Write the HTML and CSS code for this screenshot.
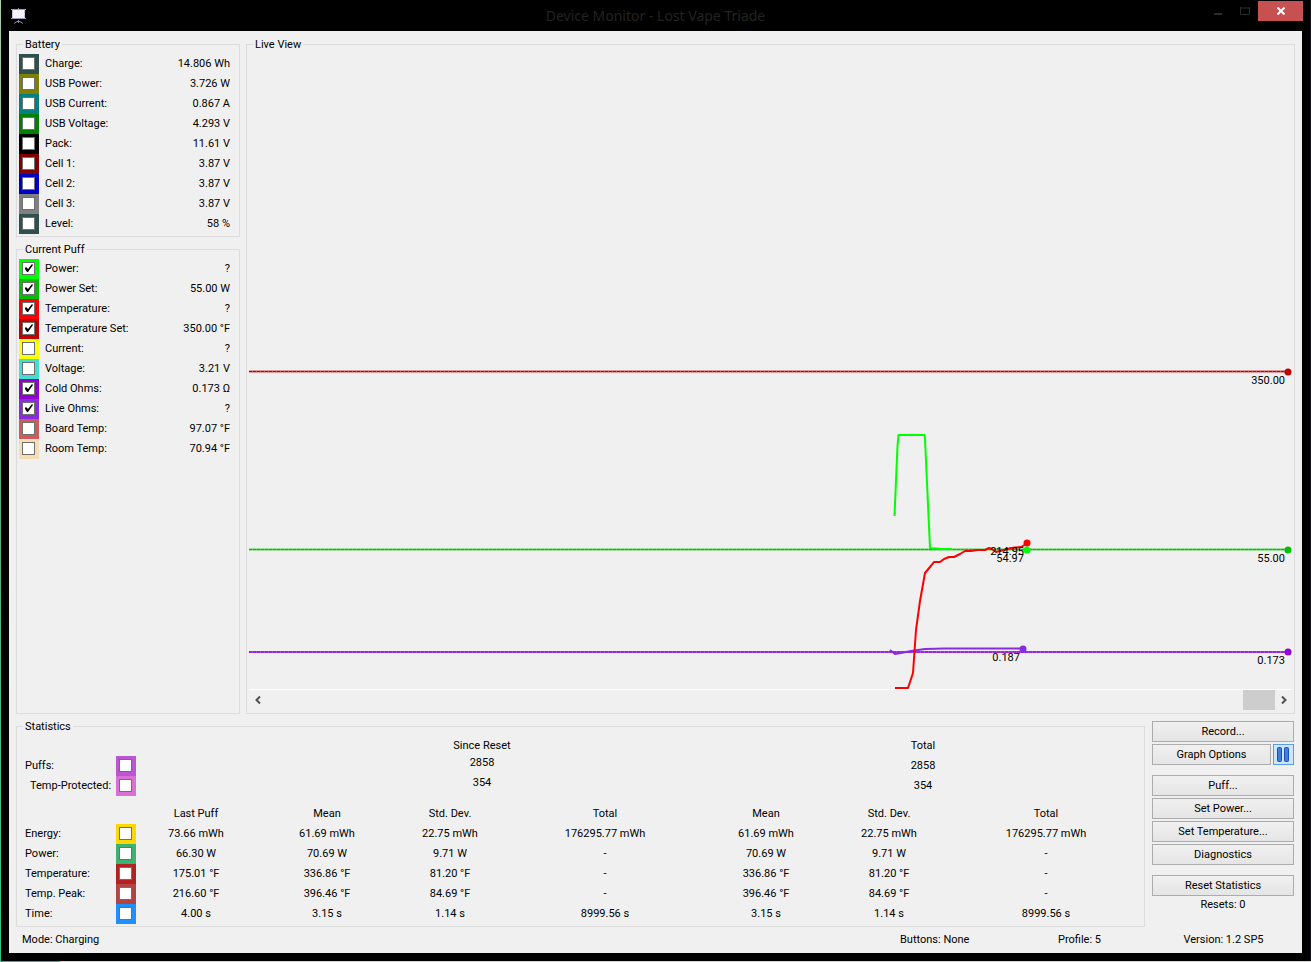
FILE: index.html
```
<!DOCTYPE html>
<html lang="en">
<head>
    <meta charset="UTF-8">
    <meta name="viewport" content="width=device-width, initial-scale=1.0">
    <title>Device Monitor - Lost Vape Triade</title>
    <link rel="stylesheet" href="styles.css">
</head>

<body>
    <div class="window">
        <header class="title-bar">
            <svg class="app-icon" width="16" height="16" viewBox="0 0 16 16">
                <path d="M7.500 0v2M7.500 12v3M3 15.500l3-2h3l3 2" fill="none" stroke="#8a8aa0" stroke-width="1" />
                <rect x="1.500" y="1.500" width="12" height="9" fill="#f4f4fa" stroke="#c4c4dc" />
                <path d="M0 1.500h15M0 10.500h15" stroke="#9a9abc" />
            </svg>
            <h1>Device Monitor - Lost Vape Triade</h1>
            <div class="window-btns">
                <button class="win-btn" aria-label="Minimize">
                    <svg width="10" height="8" viewBox="0 0 10 8"><rect x="1" y="6" width="8" height="2" fill="#2c2c2c" /></svg>
                </button>
                <button class="win-btn" aria-label="Maximize">
                    <svg width="10" height="8" viewBox="0 0 10 8"><path d="M.5 0v7.500h9V0M0 1h10" fill="none" stroke="#2c2c2c" /></svg>
                </button>
                <button class="win-btn close-btn" aria-label="Close">
                    <svg width="8" height="8" viewBox="0 0 8 8"><path d="M.5.5l7 7M7.500.5l-7 7" stroke="#fff" stroke-width="2" /></svg>
                </button>
            </div>
        </header>

        <main class="client">
            <div class="top">
                <div class="left">
                    <fieldset class="group">
                        <legend>Battery</legend>
                        <div class="row"><span class="swatch slate"><input type="checkbox" id="charge"></span><label for="charge">Charge:</label><output>14.806 Wh</output></div>
                        <div class="row"><span class="swatch olive"><input type="checkbox" id="usb-power"></span><label for="usb-power">USB Power:</label><output>3.726 W</output></div>
                        <div class="row"><span class="swatch teal"><input type="checkbox" id="usb-current"></span><label for="usb-current">USB Current:</label><output>0.867 A</output></div>
                        <div class="row"><span class="swatch green"><input type="checkbox" id="usb-voltage"></span><label for="usb-voltage">USB Voltage:</label><output>4.293 V</output></div>
                        <div class="row"><span class="swatch black"><input type="checkbox" id="pack"></span><label for="pack">Pack:</label><output>11.61 V</output></div>
                        <div class="row"><span class="swatch maroon"><input type="checkbox" id="cell1"></span><label for="cell1">Cell 1:</label><output>3.87 V</output></div>
                        <div class="row"><span class="swatch blue"><input type="checkbox" id="cell2"></span><label for="cell2">Cell 2:</label><output>3.87 V</output></div>
                        <div class="row"><span class="swatch gray"><input type="checkbox" id="cell3"></span><label for="cell3">Cell 3:</label><output>3.87 V</output></div>
                        <div class="row"><span class="swatch slate"><input type="checkbox" id="level"></span><label for="level">Level:</label><output>58 %</output></div>
                    </fieldset>

                    <fieldset class="group puff">
                        <legend>Current Puff</legend>
                        <div class="row"><span class="swatch lime"><input type="checkbox" id="power" checked></span><label for="power">Power:</label><output>?</output></div>
                        <div class="row"><span class="swatch power-set"><input type="checkbox" id="power-set" checked></span><label for="power-set">Power Set:</label><output>55.00 W</output></div>
                        <div class="row"><span class="swatch red"><input type="checkbox" id="temp" checked></span><label for="temp">Temperature:</label><output>?</output></div>
                        <div class="row"><span class="swatch temp-set"><input type="checkbox" id="temp-set" checked></span><label for="temp-set">Temperature Set:</label><output>350.00 °F</output></div>
                        <div class="row"><span class="swatch yellow"><input type="checkbox" id="current"></span><label for="current">Current:</label><output>?</output></div>
                        <div class="row"><span class="swatch turquoise"><input type="checkbox" id="voltage"></span><label for="voltage">Voltage:</label><output>3.21 V</output></div>
                        <div class="row"><span class="swatch cold"><input type="checkbox" id="cold-ohms" checked></span><label for="cold-ohms">Cold Ohms:</label><output>0.173 Ω</output></div>
                        <div class="row"><span class="swatch live"><input type="checkbox" id="live-ohms" checked></span><label for="live-ohms">Live Ohms:</label><output>?</output></div>
                        <div class="row"><span class="swatch indian"><input type="checkbox" id="board-temp"></span><label for="board-temp">Board Temp:</label><output>97.07 °F</output></div>
                        <div class="row"><span class="swatch wheat"><input type="checkbox" id="room-temp"></span><label for="room-temp">Room Temp:</label><output>70.94 °F</output></div>
                    </fieldset>
                </div>

                <fieldset class="group live-view">
                    <legend>Live View</legend>
                    <svg class="chart" viewBox="0 0 1043 638" preserveAspectRatio="xMaxYMax meet">
                        <!-- set points -->
                        <g class="line set">
                            <path d="M0 320.5H1039" stroke="#c00000" />
                            <path d="M0 498.5H1039" stroke="#00c000" />
                            <path d="M0 601H1039" stroke="#9400d3" />
                        </g>
                        <g class="line dashes">
                            <path d="M0 320.5H1039" stroke="#c00000" />
                            <path d="M0 498.5H1039" stroke="#00c000" />
                            <path d="M0 601H1039" stroke="#9400d3" />
                        </g>
                        <!-- readings -->
                        <g class="line">
                            <path d="M641 599l5 4 6-1 10-2 14-2 20-0.500h78" stroke="#8a2be2" />
                            <path d="M645.500 465l3-70 1-11h5l14 0 7 0 0.500 4 5 109 12 1h10" stroke="#00ff00" />
                            <path d="M646 637h13l5-15 3-43 4-29 5-28 5-6 4-5h6l4-3 5-2h5l6-3 5-3h6l6-1h8l4-2 3 1 4 3 8-2 7-2 10-1 7-4" stroke="#ff0000" />
                        </g>
                        <g>
                            <circle cx="1039" cy="321" r="3.5" fill="#c00000" />
                            <circle cx="1039" cy="499" r="3.5" fill="#00c000" />
                            <circle cx="1039" cy="601" r="3.5" fill="#9400d3" />
                            <circle cx="774" cy="598" r="3.5" fill="#8a2be2" />
                            <circle cx="778" cy="492" r="3.5" fill="#ff0000" />
                            <circle cx="778" cy="499" r="3.5" fill="#00ff00" />
                        </g>
                        <g class="values">
                            <text x="1036" y="333">350.00</text>
                            <text x="1036" y="511">55.00</text>
                            <text x="1036" y="613">0.173</text>
                            <text x="771" y="610">0.187</text>
                            <text x="775" y="504">214.95</text>
                            <text x="775" y="511">54.97</text>
                        </g>
                    </svg>
                    <div class="scroll">
                        <button class="arrow" aria-label="Scroll left"><svg width="6" height="8" viewBox="0 0 6 8"><path d="M5 .5L1.500 4 5 7.500" fill="none" stroke="#505050" stroke-width="2" /></svg></button>
                        <div class="thumb"></div>
                        <button class="arrow" aria-label="Scroll right"><svg width="6" height="8" viewBox="0 0 6 8"><path d="M1 .5L4.500 4 1 7.500" fill="none" stroke="#505050" stroke-width="2" /></svg></button>
                    </div>
                </fieldset>
            </div>

            <div class="bottom">
                <fieldset class="group stats">
                    <legend>Statistics</legend>
                    <table>
                        <colgroup>
                            <col class="c-label"><col class="c-box"><col class="c-last">
                            <col class="c-mean"><col class="c-dev"><col class="c-total">
                            <col class="c-mean2"><col class="c-dev2"><col class="c-total2">
                        </colgroup>
                        <tbody class="puffs">
                            <tr><td colspan="3"></td><th colspan="3">Since Reset</th><th colspan="3">Total</th></tr>
                            <tr>
                                <th><label for="s-puffs">Puffs:</label></th>
                                <td><span class="swatch orchid-dark"><input type="checkbox" id="s-puffs"></span></td>
                                <td></td><td colspan="3" class="reset-count">2858</td><td colspan="3">2858</td>
                            </tr>
                            <tr>
                                <th class="sub"><label for="s-protected">Temp-Protected:</label></th>
                                <td><span class="swatch orchid"><input type="checkbox" id="s-protected"></span></td>
                                <td></td><td colspan="3" class="reset-count">354</td><td colspan="3">354</td>
                            </tr>
                        </tbody>
                        <tbody>
                            <tr class="heads">
                                <td colspan="2"></td><th>Last Puff</th>
                                <th>Mean</th><th>Std. Dev.</th><th>Total</th>
                                <th>Mean</th><th>Std. Dev.</th><th>Total</th>
                            </tr>
                            <tr>
                                <th><label for="s-energy">Energy:</label></th>
                                <td><span class="swatch gold"><input type="checkbox" id="s-energy"></span></td>
                                <td>73.66 mWh</td><td>61.69 mWh</td><td>22.75 mWh</td><td>176295.77 mWh</td>
                                <td>61.69 mWh</td><td>22.75 mWh</td><td>176295.77 mWh</td>
                            </tr>
                            <tr>
                                <th><label for="s-power">Power:</label></th>
                                <td><span class="swatch sea"><input type="checkbox" id="s-power"></span></td>
                                <td>66.30 W</td><td>70.69 W</td><td>9.71 W</td><td>-</td>
                                <td>70.69 W</td><td>9.71 W</td><td>-</td>
                            </tr>
                            <tr>
                                <th><label for="s-temp">Temperature:</label></th>
                                <td><span class="swatch brick"><input type="checkbox" id="s-temp"></span></td>
                                <td>175.01 °F</td><td>336.86 °F</td><td>81.20 °F</td><td>-</td>
                                <td>336.86 °F</td><td>81.20 °F</td><td>-</td>
                            </tr>
                            <tr>
                                <th><label for="s-peak">Temp. Peak:</label></th>
                                <td><span class="swatch peak"><input type="checkbox" id="s-peak"></span></td>
                                <td>216.60 °F</td><td>396.46 °F</td><td>84.69 °F</td><td>-</td>
                                <td>396.46 °F</td><td>84.69 °F</td><td>-</td>
                            </tr>
                            <tr>
                                <th><label for="s-time">Time:</label></th>
                                <td><span class="swatch dodger"><input type="checkbox" id="s-time"></span></td>
                                <td>4.00 s</td><td>3.15 s</td><td>1.14 s</td><td>8999.56 s</td>
                                <td>3.15 s</td><td>1.14 s</td><td>8999.56 s</td>
                            </tr>
                        </tbody>
                    </table>
                </fieldset>

                <div class="side">
                    <div class="btn-list">
                        <button class="btn">Record...</button>
                        <div class="btn-row">
                            <button class="btn">Graph Options</button>
                            <button class="btn pause-btn" aria-label="Pause">
                                <svg width="13" height="15" viewBox="0 0 13 15">
                                    <g fill="#3f7de0" stroke="#1b50b8">
                                        <rect x=".5" y=".5" width="4" height="14" rx="1" />
                                        <rect x="7.500" y=".5" width="4" height="14" rx="1" />
                                    </g>
                                </svg>
                            </button>
                        </div>
                    </div>
                    <div class="btn-list">
                        <button class="btn">Puff...</button>
                        <button class="btn">Set Power...</button>
                        <button class="btn">Set Temperature...</button>
                        <button class="btn">Diagnostics</button>
                    </div>
                    <div class="btn-list">
                        <button class="btn">Reset Statistics</button>
                        <div class="resets">Resets: 0</div>
                    </div>
                </div>
            </div>

            <footer class="status">
                <span>Mode: Charging</span>
                <span>Buttons: None</span>
                <span>Profile: 5</span>
                <span class="version">Version: 1.2 SP5</span>
            </footer>
        </main>
    </div>
</body>

</html>
```

FILE: styles.css
```
* {
    box-sizing: border-box;
}

body {
    margin: 0;
    padding: 0 1px 1px;
    min-height: 100vh;
    display: flex;
    background:
        linear-gradient(#a8cfa8, #5fa878 40%, #2fc090) left / 1px 100% no-repeat,
        linear-gradient(90deg, #2fb090 60px, #d8d8d8 60px) bottom / 100% 1px no-repeat,
        #101418;
    color: #000;
    font: 11px/14px Roboto, "Liberation Sans", sans-serif;
}

button,
input {
    font: inherit;
    color: inherit;
    margin: 0;
    padding: 0;
}

.window {
    flex: 1;
    display: flex;
    flex-direction: column;
    background: #000;
    padding: 0 8px 8px;
}

/* title bar */
.title-bar {
    display: grid;
    grid-template-columns: 1fr auto 1fr;
    height: 31px;
    align-items: center;
}

.title-bar h1 {
    margin: 0;
    font: 14px/20px "Noto Sans", "Open Sans", sans-serif;
    color: #232323;
}

.app-icon {
    margin-left: 2px;
}

.window-btns {
    display: flex;
    justify-content: flex-end;
    align-self: start;
    margin-right: -1px;
    padding-top: 1px;
}

.win-btn {
    display: flex;
    align-items: center;
    justify-content: center;
    width: 27px;
    height: 20px;
    border: 0;
    background: none;
}

.close-btn {
    width: 45px;
    background: #c75050;
}

/* groups */
.client {
    flex: 1;
    display: flex;
    flex-direction: column;
    background: #f0f0f0;
    padding: 7px 7px 0;
}

.top {
    flex: 1;
    display: flex;
    gap: 6px;
}

.left {
    width: 224px;
    display: flex;
    flex-direction: column;
    gap: 6px;
}

.group {
    min-width: 0;
    margin: 0;
    padding: 3px 2px 2px;
    border: 1px solid #dcdcdc;
}

.group legend {
    height: 13px;
    margin-left: 4px;
    padding: 0 2px;
}

.puff {
    flex: 1;
}

.row {
    display: flex;
    align-items: center;
    height: 20px;
    padding-right: 7px;
}

.row label {
    flex: 1;
    padding-left: 6px;
}

.swatch {
    display: flex;
    width: 20px;
    height: 20px;
    padding: 3px;
}

.swatch input {
    appearance: none;
    width: 13px;
    height: 13px;
    border: 1px solid #707070;
    background: #fff;
}

.swatch input:checked::before {
    content: "";
    display: block;
    width: 11px;
    height: 11px;
    background: #000;
    clip-path: polygon(2px 5px, 3px 4px, 5px 6px, 9px 1px, 10px 2px, 5px 9px, 4px 9px, 2px 6px);
}

.slate { background: #2f4f4f; }
.olive { background: #808000; }
.teal { background: #008080; }
.green { background: #008000; }
.black { background: #000; }
.maroon { background: #800000; }
.blue { background: #0000c0; }
.gray { background: #808080; }
.lime { background: #00ff00; }
.power-set { background: #00c000; }
.red { background: #ff0000; }
.temp-set { background: #c00000; }
.yellow { background: #ffff00; }
.turquoise { background: #40e0d0; }
.cold { background: #9400d3; }
.live { background: #8a2be2; }
.indian { background: #cd5c5c; }
.wheat { background: #f5deb3; }
.orchid-dark { background: #ba55d3; }
.orchid { background: #da70d6; }
.gold { background: #ffd700; }
.sea { background: #3cb371; }
.brick { background: #b22222; }
.peak { background: #b24444; }
.dodger { background: #1e90ff; }

/* live view */
.live-view {
    flex: 1;
    display: flex;
    flex-direction: column;
    padding: 0 2px 3px;
}

.chart {
    display: block;
    flex: 1;
    width: 100%;
    min-height: 0;
}

.line path {
    fill: none;
    stroke-width: 2;
    stroke-linejoin: round;
}

.set path {
    stroke-opacity: 0.7;
}

.dashes path {
    stroke-width: 1;
    stroke-dasharray: 3 1;
}

.values text {
    text-anchor: end;
}

.scroll {
    display: flex;
    justify-content: space-between;
    height: 21px;
    border-top: 1px solid #fff;
}

.arrow {
    display: flex;
    align-items: center;
    justify-content: center;
    width: 17px;
    border: 0;
    background: none;
}

.thumb {
    width: 32px;
    margin-left: auto;
    background: #cdcdcd;
}

/* statistics */
.bottom {
    display: flex;
    gap: 7px;
    margin-top: 6px;
}

.stats {
    flex: 1;
    padding-left: 0;
    padding-right: 6px;
}

.stats legend {
    margin-left: 6px;
}

.stats table {
    width: 100%;
    table-layout: fixed;
    border-collapse: collapse;
    text-align: center;
    white-space: nowrap;
}

.stats tr {
    height: 20px;
}

.stats th,
.stats td {
    padding: 0;
    font-weight: normal;
}

.stats th:has(label) {
    text-align: left;
    padding-left: 8px;
}

.stats .sub:has(label) {
    padding-left: 13px;
}

.stats .reset-count {
    padding-bottom: 6px;
}

.stats .heads {
    height: 28px;
}

.stats .heads th {
    padding-top: 8px;
}

.c-label { width: 99px; }
.c-box { width: 20px; }
.c-last { width: 120px; }
.c-mean { width: 142px; }
.c-dev { width: 104px; }
.c-total { width: 206px; }
.c-mean2 { width: 116px; }
.c-dev2 { width: 130px; }
.c-total2 { width: 184px; }

/* buttons */
.side {
    width: 143px;
    display: flex;
    flex-direction: column;
    gap: 10px;
    padding: 1px 1px 0 0;
}

.btn-list {
    display: flex;
    flex-direction: column;
    gap: 2px;
}

.btn-row {
    display: flex;
    gap: 2px;
}

.btn {
    flex: 1;
    min-height: 21px;
    border: 1px solid #acacac;
    background: linear-gradient(#f0f0f0, #e5e5e5);
}

.pause-btn {
    display: flex;
    flex: none;
    align-items: center;
    justify-content: center;
    width: 21px;
    border-color: #569de5;
    background: #cfe5fb;
}

.resets {
    text-align: center;
}

.status {
    display: grid;
    grid-template-columns: 1fr 158px 94px 143px;
    align-items: center;
    height: 26px;
    padding-left: 6px;
}

.version {
    text-align: center;
}
```
